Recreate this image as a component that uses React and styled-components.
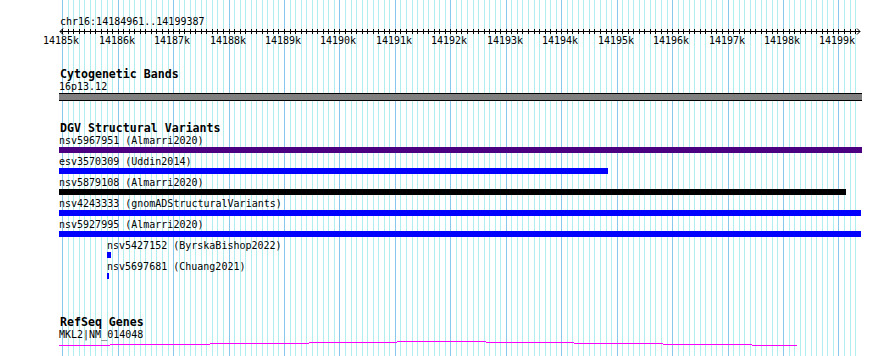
import React from 'react';
import styled, { createGlobalStyle } from 'styled-components';

const START = 14184961;
const END = 14199387;
const LEFT = 60;
const WIDTH = 800;
const toX = (pos) => LEFT + ((pos - START) * WIDTH) / (END - START + 1);

const GlobalStyle = createGlobalStyle`
  body {
    margin: 0;
    background: #ffffff;
  }
`;

const Panel = styled.div`
  position: relative;
  width: 890px;
  height: 356px;
  overflow: hidden;
  background: #ffffff;
  padding-top: 16px;
  box-sizing: border-box;
  font-family: "DejaVu Sans Mono", "Liberation Mono", monospace;
  color: #000;
`;

const GridLayer = styled.svg`
  position: absolute;
  left: 0;
  top: 0;
  z-index: 0;
`;

const Content = styled.div`
  position: relative;
  z-index: 1;
`;

const RulerTitle = styled.div`
  padding-left: 60px;
  font-size: 10px;
  line-height: 12px;
  white-space: pre;
`;

const RulerSvg = styled.svg`
  display: block;
`;

const Track = styled.section`
  display: flex;
  flex-direction: column;
  align-items: flex-start;
  padding-left: 59px;
  margin-top: ${(p) => p.$gap}px;
`;

const TrackTitle = styled.div`
  font-weight: bold;
  font-size: 11.6px;
  line-height: 13px;
  padding-left: 1px;
  white-space: pre;
`;

const Label = styled.div`
  font-size: 10px;
  line-height: ${(p) => p.$lh || 12}px;
  white-space: pre;
`;

const Row = styled.div`
  margin-bottom: 3px;
`;

const Bar = styled.div`
  height: ${(p) => p.$h || 6}px;
  background: ${(p) => p.$color};
  box-sizing: border-box;
  border-top: ${(p) => (p.$outline ? '1px solid #000' : 'none')};
  border-bottom: ${(p) => (p.$outline ? '1px solid #000' : 'none')};
`;

const GeneLine = styled.svg`
  display: block;
`;

const ticks = [];
for (let p = 14185000; p <= END; p += 100) ticks.push(p);

function Grid() {
  return (
    <GridLayer width="890" height="356" shapeRendering="crispEdges">
      {ticks.map((p) => {
        const x = Math.round(toX(p)) + 0.5;
        const major = p % 1000 === 0;
        return (
          <line
            key={p}
            x1={x}
            x2={x}
            y1="0"
            y2="356"
            stroke={major ? '#87c8ec' : '#b0eef0'}
            strokeWidth="1"
          />
        );
      })}
    </GridLayer>
  );
}

function Ruler() {
  return (
    <RulerSvg width="890" height="18" shapeRendering="crispEdges">
      <line x1="60" x2="860" y1="3.5" y2="3.5" stroke="#000" />
      <polyline points="63,0.5 60,3.5 63,6.5" fill="none" stroke="#000" shapeRendering="auto" />
      <polyline points="857,0.5 860,3.5 857,6.5" fill="none" stroke="#000" shapeRendering="auto" />
      {ticks.map((p) => {
        const x = Math.round(toX(p)) + 0.5;
        return <line key={p} x1={x} x2={x} y1="1" y2="6" stroke="#000" />;
      })}
      {ticks
        .filter((p) => p % 1000 === 0)
        .map((p) => (
          <text
            key={p}
            x={Math.round(toX(p)) - 1}
            y="16"
            textAnchor="middle"
            fontFamily='"DejaVu Sans Mono", monospace'
            fontSize="10"
            fill="#000"
          >
            {p / 1000}k
          </text>
        ))}
    </RulerSvg>
  );
}

const variants = [
  { id: 'nsv5967951', src: 'Almarri2020', x0: 59, x1: 862, color: '#4b0082' },
  { id: 'esv3570309', src: 'Uddin2014', x0: 59, x1: 608, color: '#0000ff' },
  { id: 'nsv5879108', src: 'Almarri2020', x0: 59, x1: 846, color: '#000000' },
  { id: 'nsv4243333', src: 'gnomADStructuralVariants', x0: 59, x1: 861, color: '#0000ff' },
  { id: 'nsv5927995', src: 'Almarri2020', x0: 59, x1: 861, color: '#0000ff' },
  { id: 'nsv5427152', src: 'ByrskaBishop2022', x0: 107, x1: 111, color: '#0000ff' },
  { id: 'nsv5697681', src: 'Chuang2021', x0: 107, x1: 109, color: '#0000ff' },
];

// intron hat of the gene, drawn as pixel steps
const hat = [
  [59, 110, 5],
  [110, 210, 4],
  [210, 309, 3],
  [309, 397, 2],
  [397, 486, 1],
  [486, 574, 2],
  [574, 663, 3],
  [663, 752, 4],
  [752, 797, 5],
];

export default function App() {
  return (
    <Panel>
      <GlobalStyle />
      <Grid />
      <Content>
        <RulerTitle>chr16:14184961..14199387</RulerTitle>
        <Ruler />

        <Track $gap={22}>
          <TrackTitle>Cytogenetic Bands</TrackTitle>
          <Label>16p13.12</Label>
          <Bar $h={8} $color="#808080" $outline style={{ width: 803 }} />
        </Track>

        <Track $gap={21}>
          <TrackTitle>DGV Structural Variants</TrackTitle>
          {variants.map((v) => (
            <Row key={v.id} style={{ paddingLeft: v.x0 - 59 }}>
              <Label>{`${v.id} (${v.src})`}</Label>
              <Bar $color={v.color} style={{ width: v.x1 - v.x0 }} />
            </Row>
          ))}
        </Track>

        <Track $gap={34}>
          <TrackTitle>RefSeq Genes</TrackTitle>
          <Label $lh={11}>MKL2|NM_014048</Label>
          <GeneLine width="803" height="6" shapeRendering="crispEdges">
            {hat.map(([a, b, y]) => (
              <line key={a} x1={a - 59} x2={b - 59} y1={y + 0.5} y2={y + 0.5} stroke="#ff00ff" />
            ))}
          </GeneLine>
        </Track>
      </Content>
    </Panel>
  );
}
